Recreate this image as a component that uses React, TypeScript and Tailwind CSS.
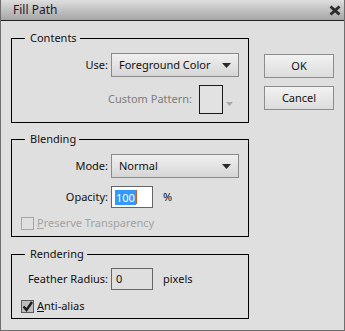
import React from 'react';

const font = { fontFamily: '"Noto Sans", "DejaVu Sans", sans-serif' };

function Group({ title, className, children }: { title: string; className: string; children: React.ReactNode }) {
  return (
    <div className={`relative border border-black ${className}`}>
      <span className="absolute left-[13px] top-[-9px] bg-[#dfdfdf] pl-[5px] pr-[3px] text-[11px] leading-[16px] text-[#111]">
        {title}
      </span>
      {children}
    </div>
  );
}

function SelectBox({ value }: { value: string }) {
  return (
    <div className="flex h-[24px] w-[128px] items-center justify-between border border-[#8a8a8a] bg-gradient-to-b from-[#f0f0f0] to-[#d6d6d6] pl-[7px] pr-[7px] text-[11px] text-[#111]">
      <span>{value}</span>
      <svg width="9" height="5" viewBox="0 0 9 5">
        <path d="M0 0 H9 L4.5 5 Z" fill="#2a2a2a" />
      </svg>
    </div>
  );
}

function FieldLabel({ children }: { children: React.ReactNode }) {
  return <span className="w-[96px] shrink-0 text-right text-[11px] text-[#111]">{children}</span>;
}

export default function App() {
  return (
    <div style={font} className="flex h-[331px] w-[345px] flex-col border-x border-b border-[#6e6e6e] bg-[#dfdfdf]">
      {/* title bar */}
      <div className="flex h-[21px] shrink-0 items-center justify-between border-b border-[#222] bg-gradient-to-b from-[#dedede] to-[#a6a6a6] pl-[12px] pr-[3px]">
        <span className="text-[12px] text-[#2a1030]">Fill Path</span>
        <svg width="12" height="11" viewBox="0 0 12 11" className="mt-[1px]">
          <path d="M1.5 1.5 L10.5 9.5 M10.5 1.5 L1.5 9.5" stroke="#2c2c2c" strokeWidth="3" />
        </svg>
      </div>

      <div className="flex pl-[10px] pt-[17px]">
        {/* left column */}
        <div className="flex w-[238px] flex-col">
          <Group title="Contents" className="h-[85px]">
            <div className="flex items-center pt-[14px]">
              <FieldLabel>Use:</FieldLabel>
              <div className="ml-[3px]">
                <SelectBox value="Foreground Color" />
              </div>
            </div>
            <div className="mt-[8px] flex items-center justify-end pr-[15px]">
              <span className="text-[11px] text-[#7c7c7c]">Custom Pattern:</span>
              <div className="ml-[7px] h-[29px] w-[24px] border border-[#1a1a1a] bg-[#e2e2e2]" />
              <svg width="7" height="4" viewBox="0 0 7 4" className="ml-[3px] mt-[9px]">
                <path d="M0 0 H7 L3.5 4 Z" fill="#a8a8a8" />
              </svg>
            </div>
          </Group>

          <Group title="Blending" className="mt-[16px] h-[98px]">
            <div className="flex items-center pt-[14px]">
              <FieldLabel>Mode:</FieldLabel>
              <div className="ml-[3px]">
                <SelectBox value="Normal" />
              </div>
            </div>
            <div className="mt-[8px] flex items-center">
              <FieldLabel>Opacity:</FieldLabel>
              <div className="ml-[3px] flex h-[22px] w-[42px] items-center border border-[#666] bg-white pl-[3px]">
                <span className="flex items-center">
                  <span className="bg-[#3399ff] px-[1px] text-[11px] leading-[15px] text-white">100</span>
                  <span className="h-[14px] w-[1px] bg-[#c06020]" />
                </span>
              </div>
              <span className="ml-[10px] text-[11px] text-[#111]">%</span>
            </div>
            <div className="mt-[7px] flex items-center pl-[9px]">
              <div className="h-[13px] w-[13px] border border-[#a6a6a6] bg-[#dfdfdf]" />
              <span className="ml-[3px] text-[11px] text-[#a2a2a2]">
                <span className="underline">P</span>reserve Transparency
              </span>
            </div>
          </Group>

          <Group title="Rendering" className="mt-[17px] h-[65px]">
            <div className="flex items-center pt-[13px]">
              <FieldLabel>Feather Radius:</FieldLabel>
              <div className="ml-[3px] flex h-[22px] w-[42px] items-center border border-[#666] bg-[#dfdfdf] pl-[4px] text-[11px] text-[#111]">
                0
              </div>
              <span className="ml-[10px] text-[11px] text-[#111]">pixels</span>
            </div>
            <div className="mt-[8px] flex items-center pl-[9px]">
              <div className="flex h-[13px] w-[13px] items-center justify-center border border-[#5a5a5a] bg-[#bdbdbd]">
                <svg width="11" height="11" viewBox="0 0 11 11">
                  <path d="M1.5 5.5 L4.5 9 L10 1" stroke="#1e1e1e" strokeWidth="2.4" fill="none" />
                </svg>
              </div>
              <span className="ml-[3px] text-[11px] text-[#111]">
                <span className="underline">A</span>nti-alias
              </span>
            </div>
          </Group>
        </div>

        {/* right column */}
        <div className="ml-[15px] flex flex-col pt-[16px]">
          <button className="h-[24px] w-[70px] border border-[#8c8c8c] bg-gradient-to-b from-[#f2f2f2] to-[#dcdcdc] text-[11px] text-[#111]">
            OK
          </button>
          <button className="mt-[8px] h-[24px] w-[70px] border border-[#8c8c8c] bg-gradient-to-b from-[#f2f2f2] to-[#dcdcdc] text-[11px] text-[#111]">
            Cancel
          </button>
        </div>
      </div>
    </div>
  );
}
